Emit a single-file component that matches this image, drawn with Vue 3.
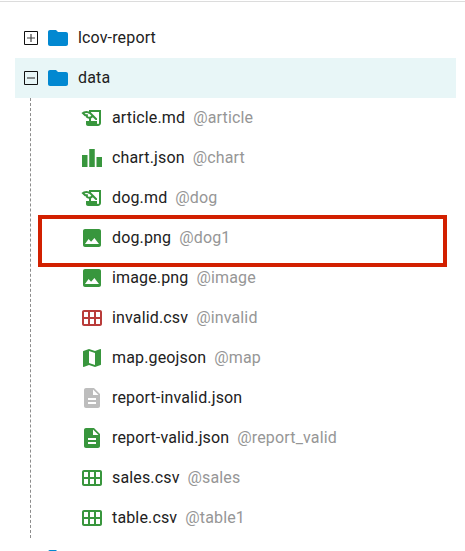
<script setup>
const icons = {
  folder: 'M10 4H4c-1.1 0-1.99.9-1.99 2L2 18c0 1.1.9 2 2 2h16c1.1 0 2-.9 2-2V8c0-1.1-.9-2-2-2h-8l-2-2z',
  article: 'M9 4v1.38c-.83-.33-1.72-.5-2.61-.5-1.79 0-3.58.68-4.95 2.05l3.33 3.33h1.11v1.11c.86.86 1.98 1.31 3.11 1.36V15H6v3c0 1.1.9 2 2 2h10c1.66 0 3-1.34 3-3V4H9zm-1.11 6.41V8.26H5.61L4.57 7.22a5.07 5.07 0 0 1 1.82-.34c1.34 0 2.59.52 3.54 1.46l1.41 1.41-.2.2a2.7 2.7 0 0 1-1.92.8c-.47 0-.93-.12-1.33-.34zM19 17c0 .55-.45 1-1 1s-1-.45-1-1v-2h-6v-2.59c.57-.23 1.1-.57 1.56-1.03l.2-.2L15.59 14H17v-1.41l-6-5.97V6h8v11z',
  chart: 'M7.5 21H2V9h5.5v12zm7.25-18h-5.5v18h5.5V3zM22 11h-5.5v10H22V11z',
  image: 'M19 3H5c-1.1 0-2 .9-2 2v14c0 1.1.9 2 2 2h14c1.1 0 2-.9 2-2V5c0-1.1-.9-2-2-2zM5 18l3.6-5 2.5 2.8L14.4 12l4.6 6H5z',
  table: 'M20 4H4c-1.1 0-2 .9-2 2v12c0 1.1.9 2 2 2h16c1.1 0 2-.9 2-2V6c0-1.1-.9-2-2-2zM8 11H4V6h4v5zm6 0h-4V6h4v5zm6 0h-4V6h4v5zM8 18H4v-5h4v5zm6 0h-4v-5h4v5zm6 0h-4v-5h4v5z',
  map: 'M20.5 3l-.16.03L15 5.1 9 3 3.36 4.9c-.21.07-.36.25-.36.48V20.5c0 .28.22.5.5.5l.16-.03L9 18.9l6 2.1 5.64-1.9c.21-.07.36-.25.36-.48V3.5c0-.28-.22-.5-.5-.5zM15 19l-6-2.11V5l6 2.11V19z',
  file: 'M14 2H6c-1.1 0-1.99.9-1.99 2L4 20c0 1.1.89 2 1.99 2H18c1.1 0 2-.9 2-2V8l-6-6zm2 16H8v-2h8v2zm0-4H8v-2h8v2zm-3-5V3.5L18.5 9H13z',
}
const folders = [
  { name: 'lcov-report', toggle: 'M3 7h8M7 3v8' },
  { name: 'data', toggle: 'M3 7h8', open: true },
]
const files = [
  { name: 'article.md', ref: '@article', icon: 'article' },
  { name: 'chart.json', ref: '@chart', icon: 'chart' },
  { name: 'dog.md', ref: '@dog', icon: 'article' },
  { name: 'dog.png', ref: '@dog1', icon: 'image', marked: true },
  { name: 'image.png', ref: '@image', icon: 'image' },
  { name: 'invalid.csv', ref: '@invalid', icon: 'table', state: 'error' },
  { name: 'map.geojson', ref: '@map', icon: 'map' },
  { name: 'report-invalid.json', icon: 'file', state: 'idle' },
  { name: 'report-valid.json', ref: '@report_valid', icon: 'file' },
  { name: 'sales.csv', ref: '@sales', icon: 'table' },
  { name: 'table.csv', ref: '@table1', icon: 'table' },
]
</script>

<template>
  <main class="panel">
    <div v-for="f in folders" :key="f.name" class="row folder" :class="{ open: f.open }">
      <svg class="toggle" viewBox="0 0 14 14"><path class="frame" d="M.5.5h13v13H.5z" /><path class="sign" :d="f.toggle" /></svg>
      <svg class="icon blue" viewBox="0 0 24 24"><path :d="icons.folder" /></svg>
      <span class="name">{{ f.name }}</span>
    </div>
    <div class="children">
      <div v-for="f in files" :key="f.name" class="row file" :class="{ marked: f.marked }">
        <svg class="icon" :class="f.state" viewBox="0 0 24 24"><path :d="icons[f.icon]" /></svg>
        <span class="name">{{ f.name }}</span>
        <span v-if="f.ref" class="ref">{{ f.ref }}</span>
      </div>
    </div>
    <div class="row folder next">
      <svg class="icon blue" viewBox="0 0 24 24"><path :d="icons.folder" /></svg>
    </div>
  </main>
</template>

<style>
body {
  background: #fff;
  overflow: hidden;
}
</style>

<style scoped>
.panel {
  box-sizing: border-box;
  height: 550px;
  margin-top: 1px;
  padding: 16px 9px 0 15px;
  border-top: 1px solid #dcdcdc;
  overflow: hidden;
  font: 16px/24px Roboto, sans-serif;
  letter-spacing: 0.15px;
  color: #212121;
}
.row {
  display: flex;
  align-items: center;
  height: 40px;
  white-space: nowrap;
}
.folder {
  padding-left: 9px;
}
.open {
  background: #e8f6f7;
}
.toggle {
  width: 14px;
  height: 14px;
  margin-right: 8px;
  fill: none;
}
.frame {
  stroke: #111;
  stroke-width: 1;
}
.sign {
  stroke: #444;
  stroke-width: 1.2;
}
.icon {
  flex: none;
  width: 24px;
  height: 24px;
  margin-right: 8px;
  fill: #38963d;
}
.blue {
  fill: #0288d1;
}
.error {
  fill: #b93c3a;
}
.idle {
  fill: #bdbdbd;
}
.children {
  margin-left: 15px;
  border-left: 1px dashed #8c8c8c;
}
.file {
  position: relative;
  padding-left: 49px;
}
.ref {
  margin-left: 8px;
  color: #969696;
}
.marked::after {
  content: '';
  position: absolute;
  left: 7px;
  top: -3px;
  width: 401px;
  height: 44px;
  border: 4px solid #d22000;
}
.next {
  padding-left: 31px;
}
</style>
